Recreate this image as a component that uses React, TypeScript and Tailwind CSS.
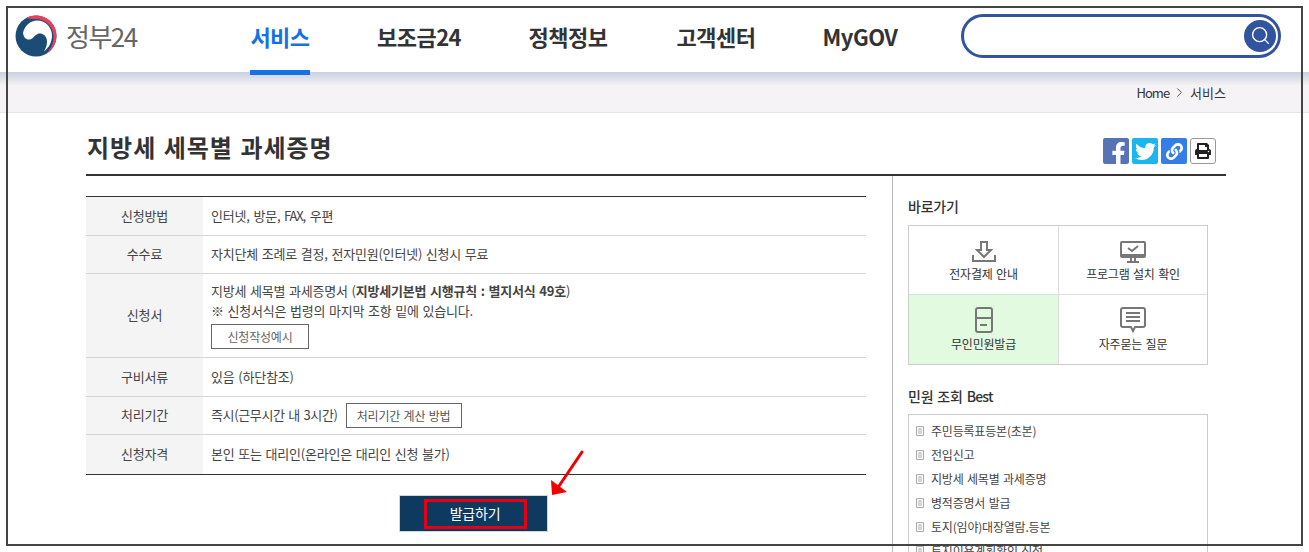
import { Search, ChevronRight } from "lucide-react";
import { FaFacebookF, FaTwitter, FaLink, FaPrint } from "react-icons/fa";

const font = "font-['Noto_Sans_CJK_KR','Noto_Sans',sans-serif]";

const nav = [
  { label: "서비스", width: "w-[60px]", active: true },
  { label: "보조금24", width: "w-[82px]" },
  { label: "정책정보", width: "w-[80px]" },
  { label: "고객센터", width: "w-[80px]" },
  { label: "MyGOV", width: "w-[72px]" },
];

const best = ["주민등록표등본(초본)", "전입신고", "지방세 세목별 과세증명", "병적증명서 발급", "토지(임야)대장열람.등본", "토지이용계획확인 신청"];

function Logo() {
  return (
    <svg width="42" height="42" viewBox="0 0 42 42">
      <circle cx="21" cy="21" r="20.5" fill="#1b4c75" />
      <path d="M11 3C14 1.300 17.500 .5 21 .5c11.500 0 20.500 9 20.500 20.500 0 8.500-5 15.500-11.500 18.500C35.500 35 38.500 29 38.500 22 38.500 11 30 4 21 4c-3.500 0-7 0-10-1Z" fill="#e8405a" />
      <path d="M8 18C9.500 10.500 15.500 5.500 22 5.500 31 5.500 37.500 13 37 21.500 36.500 28 33.500 33 29 36.500 31.500 32 32.500 28 31.800 24.500 30.800 20 26.500 17.500 22.500 19 19 20.500 18 24 14.500 24.500 11 25 8.500 22 8 18Z" fill="#fff" />
    </svg>
  );
}

function Row({ head, className, children }: { head: string; className: string; children: React.ReactNode }) {
  return (
    <div className={`flex border-b border-[#d5d5d5] last:border-b-0 ${className}`}>
      <div className="w-[117px] shrink-0 bg-[#f4f4f4] flex items-center justify-center pb-[1px] text-[#444]">{head}</div>
      <div className="flex-1 pl-[8px] flex flex-col justify-center text-[#444]">{children}</div>
    </div>
  );
}

function Shortcut({ label, className, children }: { label: string; className: string; children: React.ReactNode }) {
  return (
    <div className={`h-full flex flex-col items-center justify-center gap-[2px] ${className}`}>
      {children}
      <span className="text-[12px] leading-[17px] text-[#333] tracking-[-0.2px] [word-spacing:1px]">{label}</span>
    </div>
  );
}

export default function App() {
  return (
    <div className={`relative h-[552px] overflow-hidden bg-white tracking-[-0.2px] [word-spacing:1px] ${font}`}>
      {/* header */}
      <header className="h-[72px] flex items-center pl-[15px] pr-[28px]">
        <Logo />
        <span className="ml-[9px] w-[73px] whitespace-nowrap text-[26px] text-[#666] tracking-[-1.5px] mb-[2px]">정부24</span>
        <nav className="flex ml-[111px] gap-[68px] h-full">
          {nav.map((n) => (
            <a key={n.label} className={`${n.width} relative whitespace-nowrap flex items-center justify-center pt-[1px] text-[22px] tracking-[-0.5px] font-bold ${n.active ? "text-[#1472e6]" : "text-[#333]"}`}>
              {n.label}
              {n.active && <span className="absolute left-0 right-0 bottom-[-3px] h-[5px] bg-[#1472e6]" />}
            </a>
          ))}
        </nav>
        <div className="ml-auto w-[320px] h-[44px] mb-[1px] rounded-full border-[3px] border-[#32549f] flex items-center justify-end pr-[2px]">
          <span className="w-[32px] h-[32px] rounded-full bg-[#32549f] flex items-center justify-center">
            <Search size={21} strokeWidth={1.6} className="text-white" />
          </span>
        </div>
      </header>

      {/* breadcrumb */}
      <div className="h-[41px] bg-[linear-gradient(#c9d0e0,#f5f3f5_14px)] border-b border-[#e6e6e6] flex items-center justify-end gap-[3px] pr-[83px] pt-[1px] text-[13px] text-[#333]">
        <span className="tracking-[-1px]">Home</span>
        <ChevronRight size={15} strokeWidth={1.2} className="text-[#222]" />
        <span className="tracking-[0px]">서비스</span>
      </div>

      <main className="px-[83px] ml-[3px]">
        <div className="h-[63px] border-b-2 border-[#333] flex items-center justify-between pr-[10px]">
          <h1 className="text-[24px] font-bold text-[#333] mt-[7px] ml-[1px] tracking-[1px] [word-spacing:1px]">지방세 세목별 과세증명</h1>
          <div className="flex gap-[3px] mt-[15px]">
            <span className="w-[26px] h-[26px] rounded-[2px] bg-[#5674b5] flex items-end justify-end overflow-hidden">
              <FaFacebookF size={23} className="text-white -mb-[1px] -mr-[1px]" />
            </span>
            <span className="w-[26px] h-[26px] rounded-[2px] bg-[#1ab7ee] flex items-center justify-center">
              <FaTwitter size={21} className="text-white" />
            </span>
            <span className="w-[26px] h-[26px] rounded-[2px] bg-[#347ee4] flex items-center justify-center">
              <FaLink size={17} className="text-white" />
            </span>
            <span className="w-[26px] h-[26px] rounded-[3px] border border-[#999] bg-white flex items-center justify-center">
              <FaPrint size={16} className="text-[#222]" />
            </span>
          </div>
        </div>

        <div className="flex">
          {/* left column */}
          <div className="w-[780px] shrink-0 pt-[20px]">
            <div className="border-y border-[#333] text-[13px] leading-[20px]">
              <Row head="신청방법" className="h-[39px]">
                <p className="-mt-[1px]">인터넷, 방문, <span className="tracking-[-1.2px]">FAX</span>, 우편</p>
              </Row>
              <Row head="수수료" className="h-[38px]">
                <p className="-mt-[1px]">자치단체 조례로 결정, 전자민원(인터넷) 신청시 무료</p>
              </Row>
              <Row head="신청서" className="h-[84px]">
                <p className="-mt-[1px]">지방세 세목별 과세증명서 (<b className="font-bold">지방세기본법 시행규칙 : 별지서식 49호</b>)</p>
                <p>※ 신청서식은 법령의 마지막 조항 밑에 있습니다.</p>
                <a className="mt-[3px] w-[98px] h-[25px] border border-[#666] flex items-center justify-center text-[12px] text-[#666]">신청작성예시</a>
              </Row>
              <Row head="구비서류" className="h-[39px]">
                <p className="-mt-[1px]">있음 (하단참조)</p>
              </Row>
              <Row head="처리기간" className="h-[38px]">
                <div className="flex items-center gap-[8px]">
                  <span className="tracking-[-0.35px] -mt-[1px]">즉시(근무시간 내 3시간)</span>
                  <a className="w-[116px] h-[25px] border border-[#666] flex items-center justify-center text-[12px] text-[#555]">처리기간 계산 방법</a>
                </div>
              </Row>
              <Row head="신청자격" className="h-[39px]">
                <p className="-mt-[1px]">본인 또는 대리인(온라인은 대리인 신청 불가)</p>
              </Row>
            </div>
            <div className="relative flex justify-center pt-[20px] pr-[5px]">
              <button className="w-[149px] h-[37px] bg-[#0f3a60] border border-[#cfd6de] flex items-center justify-center text-[14px] text-white">
                <span className="ml-[3px] w-[103px] h-[30px] border-[3px] border-[#e60012] flex items-center justify-center">발급하기</span>
              </button>
              {/* red arrow annotation */}
              <svg className="absolute left-[460px] top-[-25px]" width="40" height="50" viewBox="0 0 40 50">
                <path d="M36 2 13 36" stroke="#f00000" strokeWidth="3" strokeLinecap="round" />
                <path d="M6 45 5 30 21 42Z" fill="#f00000" />
              </svg>
            </div>
          </div>

          {/* side column */}
          <aside className="ml-[26px] border-l border-[#bbb] pl-[15px] w-[334px] shrink-0 h-[380px]">
            <h2 className="mt-[20px] text-[14px] leading-[20px] font-medium text-[#333]">바로가기</h2>
            <div className="mt-[9px] w-[300px] h-[140px] border border-[#ccc] grid grid-cols-[150px_1fr] grid-rows-[69px_1fr]">
              <div className="border-r border-b border-[#ddd]">
                <Shortcut label="전자결제 안내" className="pt-[3px]">
                  <svg width="24" height="22" viewBox="0 0 24 22" fill="none" stroke="#777" strokeWidth="2">
                    <path d="M9 1h6v8h4l-7 7-7-7h4Z" />
                    <path d="M1 14v6h22v-6" />
                  </svg>
                </Shortcut>
              </div>
              <div className="border-b border-[#ddd]">
                <Shortcut label="프로그램 설치 확인" className="pt-[3px]">
                  <svg width="28" height="22" viewBox="0 0 28 22" fill="none" stroke="#777" strokeWidth="2">
                    <rect x="2" y="1" width="24" height="15" rx="1" />
                    <path d="M9 7l4 3 6-5" />
                    <path d="M2 14h24" />
                    <path d="M12 16v4M16 16v4M8 21h12" />
                  </svg>
                </Shortcut>
              </div>
              <div className="border-r border-[#ddd]">
                <Shortcut label="무인민원발급" className="bg-[#e2fadf]">
                  <svg width="20" height="26" viewBox="0 0 20 26" fill="none" stroke="#777" strokeWidth="2">
                    <rect x="2" y="1" width="16" height="24" rx="2" />
                    <path d="M2 11h16M6 18h7" />
                  </svg>
                </Shortcut>
              </div>
              <Shortcut label="자주묻는 질문" className="">
                <svg width="26" height="26" viewBox="0 0 26 26" fill="none" stroke="#777" strokeWidth="2">
                  <path d="M3 1h20a2 2 0 0 1 2 2v15a2 2 0 0 1-2 2h-8l-2 4-2-4H3a2 2 0 0 1-2-2V3a2 2 0 0 1 2-2Z" />
                  <path d="M6 6h14M6 10h14M6 14h14" />
                </svg>
              </Shortcut>
            </div>
            <h2 className="mt-[21px] text-[14px] leading-[20px] font-medium text-[#333]">
              민원 조회 <span className="tracking-[-0.8px]">Best</span>
            </h2>
            <ul className="mt-[8px] w-[300px] border border-[#ccc] pt-[4px] pl-[7px] text-[12px] text-[#444]">
              {best.map((b) => (
                <li key={b} className="h-[24px] flex items-center gap-[7px]">
                  <svg width="8" height="10" viewBox="0 0 8 10" fill="none" stroke="#aaa">
                    <path d="M.5.5h7v9h-7ZM2 3h4M2 5h4M2 7h4" />
                  </svg>
                  {b}
                </li>
              ))}
            </ul>
          </aside>
        </div>
      </main>

      {/* screenshot frame drawn over the page */}
      <div className="absolute left-[6px] top-[6px] w-[1297px] h-[540px] border-2 border-[#444] pointer-events-none" />
    </div>
  );
}
